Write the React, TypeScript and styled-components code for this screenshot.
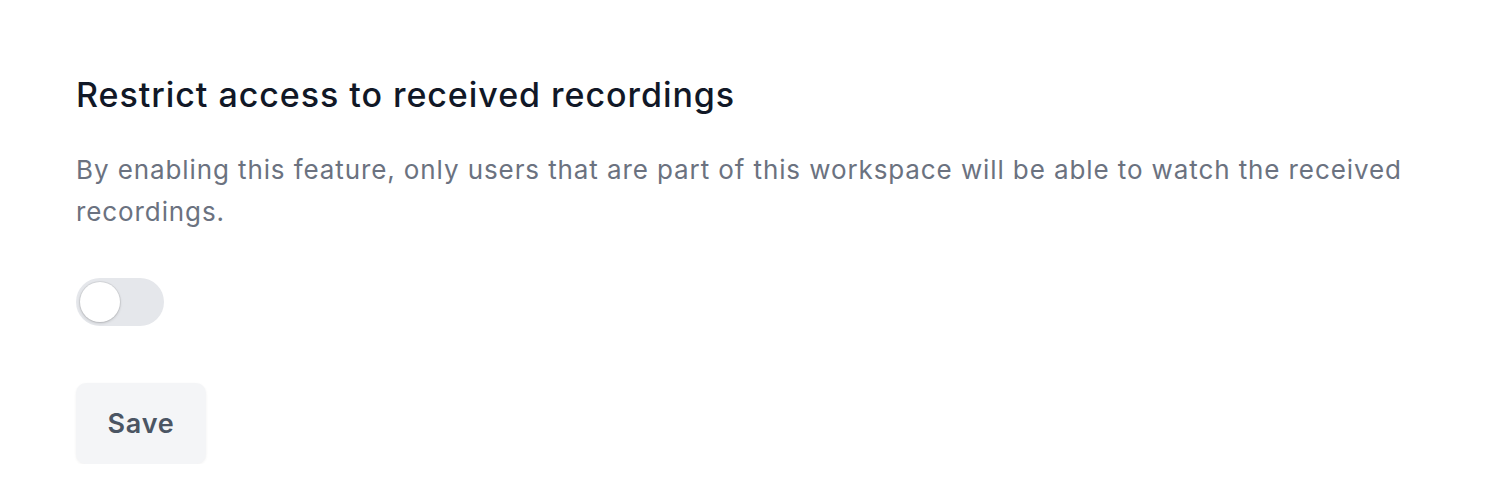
import React, { useState } from "react";
import styled, { createGlobalStyle } from "styled-components";

const Global = createGlobalStyle`
  html, body { margin: 0; padding: 0; background: #ffffff; }
  body { font-family: Inter, "Noto Sans", sans-serif; -webkit-font-smoothing: antialiased; }
`;

const Page = styled.div`
  padding: 73px 76px 0 76px;
  display: flex;
  flex-direction: column;
  align-items: flex-start;
`;

const Title = styled.h2`
  margin: 0;
  font-size: 34px;
  line-height: 44px;
  font-weight: 500;
  color: #111827;
  letter-spacing: 0.95px;
`;

const Description = styled.p`
  margin: 32px 0 0 0;
  font-size: 26px;
  line-height: 42px;
  font-weight: 400;
  color: #6b7280;
  letter-spacing: 0.9px;
  max-width: 1350px;
`;

const Track = styled.button<{ $on: boolean }>`
  margin-top: 45px;
  width: 88px;
  height: 48px;
  border: none;
  border-radius: 24px;
  padding: 4px;
  background: ${(p) => (p.$on ? "#4f46e5" : "#e5e7eb")};
  display: flex;
  align-items: center;
  cursor: pointer;
`;

const Knob = styled.span<{ $on: boolean }>`
  width: 40px;
  height: 40px;
  border-radius: 50%;
  background: #ffffff;
  box-shadow: 0 0 0 1px rgba(0, 0, 0, 0.06), 0 1px 3px rgba(0, 0, 0, 0.18);
  transform: translateX(${(p) => (p.$on ? "40px" : "0")});
  transition: transform 0.2s;
`;

const SaveButton = styled.button`
  margin-top: 57px;
  width: 130px;
  height: 81px;
  border: none;
  border-radius: 10px;
  background: #f4f5f7;
  box-shadow: 0 1px 3px rgba(0, 0, 0, 0.06);
  font-family: Inter, "Noto Sans", sans-serif;
  font-size: 27px;
  font-weight: 600;
  color: #4b5563;
  letter-spacing: 0.8px;
  cursor: pointer;
`;

export default function App() {
  const [on, setOn] = useState(false);
  return (
    <>
      <Global />
      <Page>
        <Title>Restrict access to received recordings</Title>
        <Description>
          By enabling this feature, only users that are part of this workspace will be able to watch the received recordings.
        </Description>
        <Track $on={on} onClick={() => setOn(!on)} aria-pressed={on}>
          <Knob $on={on} />
        </Track>
        <SaveButton>Save</SaveButton>
      </Page>
    </>
  );
}
